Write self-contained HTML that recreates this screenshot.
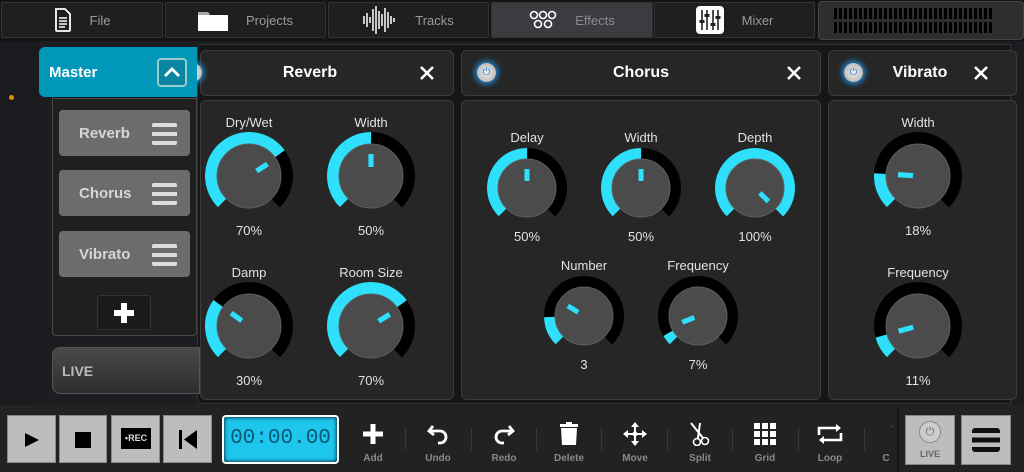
<!DOCTYPE html>
<html><head><meta charset="utf-8"><style>
*{box-sizing:border-box;margin:0;padding:0}
body{width:1024px;height:472px;overflow:hidden;background:#1c1d20;font-family:"Liberation Sans",sans-serif;position:relative}
.abs{position:absolute}
.tab{position:absolute;top:2px;height:36px;background:#1f1f1f;border:1px solid #333;border-radius:2px;color:#9a9a9a;font-size:13px;display:flex;align-items:center;justify-content:center;gap:18px}
.tab.sel{background:#3a3c40;color:#8a8c90}
.panel{position:absolute;background:#262626;border:1px solid #3c3c3c;border-radius:6px}
.hdr{color:#fff;font-weight:bold;font-size:16px;display:flex;align-items:center;justify-content:center}
.lbl{position:absolute;color:#e2e2e2;font-size:13px;text-align:center;width:120px}
.item{position:absolute;left:58px;width:133px;height:48px;background:#6c6c6c;border:1px solid #222;border-radius:5px;color:#d6d6d6;font-weight:bold;font-size:15px;display:flex;align-items:center;padding-left:20px}
.item i{position:absolute;right:13px;top:13px;width:25px;height:22px;background:linear-gradient(#ddd 0 4px,transparent 4px 9px,#ddd 9px 13px,transparent 13px 18px,#ddd 18px 22px);border-radius:2px}
.tb{position:absolute;top:415px;height:48px;background:#bdbdbd;border:1px solid #888}
.tool{position:absolute;top:421px;width:60px;text-align:center;color:#8a8a8a;font-size:10px;font-weight:bold}
.tool .ic{height:26px;margin-bottom:6px;display:flex;align-items:center;justify-content:center}
.sep{position:absolute;top:428px;width:1px;height:22px;background:#3a3a3a}
.pw{position:absolute;top:63px;width:19px;height:19px;border-radius:50%;background:radial-gradient(#eee,#aaa);box-shadow:0 0 6px 2px #1d8fe0;display:flex;align-items:center;justify-content:center;color:#1e7fd8;font-size:10px}
</style></head><body>
<div class="abs" style="left:0;top:0;width:1024px;height:41px;background:#141414"></div>
<div class="tab" style="left:1px;width:162px"><svg width="18" height="24" viewBox="0 0 18 24"><path d="M2 1h9l5 5v16a1 1 0 0 1-1 1H3a1 1 0 0 1-1-1z" fill="none" stroke="#fff" stroke-width="1.8"/><path d="M5 10h8M5 13h8M5 16h8M5 19h6" stroke="#fff" stroke-width="1.5"/></svg>File</div>
<div class="tab" style="left:165px;width:161px"><svg width="30" height="22" viewBox="0 0 30 22"><path d="M0 3h10l2 3h18v16H0z" fill="#fff"/><path d="M0 3h10l2 3H0z" fill="#aaa"/></svg>Projects</div>
<div class="tab" style="left:328px;width:161px"><svg width="34" height="30" viewBox="0 0 34 30"><g stroke="#fff" stroke-width="1.5"><path d="M1 11v8M4 8v14M7 12v6M10 4v22M13 1v28M16 6v18M19 9v12M22 3v24M25 7v16M28 11v8M31 13v4"/></g></svg>Tracks</div>
<div class="tab sel" style="left:491px;width:162px"><svg width="28" height="22" viewBox="0 0 28 22"><g fill="none" stroke="#fff" stroke-width="1.6"><circle cx="5" cy="6" r="3.5"/><circle cx="14" cy="6" r="3.5"/><circle cx="23" cy="6" r="3.5"/><circle cx="9" cy="15" r="3.5"/><circle cx="19" cy="15" r="3.5"/></g></svg>Effects</div>
<div class="tab" style="left:654px;width:161px"><svg width="28" height="28" viewBox="0 0 28 28"><rect x="0" y="0" width="28" height="28" rx="4" fill="#fff"/><g stroke="#222" stroke-width="1.6"><path d="M6 4v20M11 4v20M17 4v20M22 4v20"/></g><g fill="#222"><rect x="3.5" y="14" width="5" height="3"/><rect x="8.5" y="8" width="5" height="3"/><rect x="14.5" y="17" width="5" height="3"/><rect x="19.5" y="10" width="5" height="3"/></g></svg>Mixer</div>
<div class="abs" style="left:818px;top:1px;width:206px;height:39px;background:#2e2e2e;border-radius:4px;border:1px solid #444"></div>
<div class="abs" style="left:834px;top:8px;width:160px;height:25px;background:repeating-linear-gradient(90deg,#000 0 3px,transparent 3px 5px);-webkit-mask:linear-gradient(#000 0 11px,transparent 11px 14px,#000 14px)"></div>

<div class="abs" style="left:0;top:41px;width:38px;height:364px;background:#1a1b1e"></div>
<div class="abs" style="left:9px;top:95px;width:5px;height:5px;border-radius:50%;background:#e08a10"></div>
<div class="abs" style="left:197px;top:44px;width:823px;height:360px;background:#161616;border:1px solid #333;border-radius:4px"></div>
<div class="abs" style="left:1010px;top:44px;width:14px;height:361px;background:#1c1d20;border-left:1px solid #333"></div>

<div class="panel" style="left:200px;top:50px;width:254px;height:46px"></div>
<div class="panel" style="left:200px;top:100px;width:254px;height:300px"></div>
<div class="panel" style="left:461px;top:50px;width:360px;height:46px"></div>
<div class="panel" style="left:461px;top:100px;width:360px;height:300px"></div>
<div class="panel" style="left:828px;top:50px;width:189px;height:46px"></div>
<div class="panel" style="left:828px;top:100px;width:189px;height:300px"></div>
<div class="pw" style="left:183px">⏻</div>
<div class="pw" style="left:477px">⏻</div>
<div class="pw" style="left:844px">⏻</div>
<div class="hdr abs" style="left:200px;top:50px;width:220px;height:46px">Reverb</div>
<div class="hdr abs" style="left:461px;top:50px;width:360px;height:46px">Chorus</div>
<div class="hdr abs" style="left:860px;top:50px;width:120px;height:46px">Vibrato</div>
<svg class="abs" style="left:419px;top:65px" width="16" height="16"><path d="M2 2L14 14M14 2L2 14" stroke="#fff" stroke-width="2.6"/></svg>
<svg class="abs" style="left:786px;top:65px" width="16" height="16"><path d="M2 2L14 14M14 2L2 14" stroke="#fff" stroke-width="2.6"/></svg>
<svg class="abs" style="left:973px;top:65px" width="16" height="16"><path d="M2 2L14 14M14 2L2 14" stroke="#fff" stroke-width="2.6"/></svg>

<div class="abs" style="left:39px;top:47px;width:158px;height:50px;background:#0097b8;border-radius:6px 0 0 6px"></div>
<div class="abs" style="left:49px;top:64px;color:#fff;font-weight:bold;font-size:15px">Master</div>
<div class="abs" style="left:157px;top:58px;width:30px;height:29px;border:2px solid #9cc;border-radius:4px;background:#0a86a3"></div>
<svg class="abs" style="left:162px;top:64px" width="20" height="16"><path d="M3 12L10 5L17 12" fill="none" stroke="#fff" stroke-width="2.8"/></svg>
<div class="abs" style="left:52px;top:98px;width:145px;height:238px;background:#1f1f1f;border:1px solid #4a4a4a;border-radius:0 0 4px 4px"></div>
<div class="item" style="top:109px">Reverb<i></i></div>
<div class="item" style="top:169px">Chorus<i></i></div>
<div class="item" style="top:230px">Vibrato<i></i></div>
<div class="abs" style="left:97px;top:295px;width:54px;height:35px;background:#1a1a1a;border:1px solid #333;border-radius:3px"></div>
<svg class="abs" style="left:111px;top:300px" width="26" height="26"><path d="M13 3v20M3 13h20" stroke="#fff" stroke-width="6"/></svg>
<div class="abs" style="left:52px;top:347px;width:148px;height:47px;background:linear-gradient(#4a4a4a,#2e2e2e);border:1px solid #555;border-radius:8px 0 0 8px"></div>
<div class="abs" style="left:62px;top:363px;color:#bbb;font-weight:bold;font-size:14px">LIVE</div>

<svg class="abs" style="left:0;top:0" width="1024" height="472">
<defs>
<g id="kb"><circle r="38" fill="none" stroke="#000" stroke-width="12" stroke-dasharray="179.07 300" transform="rotate(135)"/></g>
<g id="ks"><circle r="34.5" fill="none" stroke="#000" stroke-width="11" stroke-dasharray="162.58 300" transform="rotate(135)"/></g>
</defs>
<g transform="translate(249,176)"><use href="#kb"/><circle r="38" fill="none" stroke="#2ee0fb" stroke-width="12" stroke-dasharray="125.35 300" transform="rotate(135)"/><circle r="32" fill="#4b4b4b" stroke="#5e5e5e"/><rect x="-2.6" y="-22" width="5.2" height="13" fill="#2ee0fb" transform="rotate(57)"/></g>
<g transform="translate(371,176)"><use href="#kb"/><circle r="38" fill="none" stroke="#2ee0fb" stroke-width="12" stroke-dasharray="89.5 300" transform="rotate(135)"/><circle r="32" fill="#4b4b4b" stroke="#5e5e5e"/><rect x="-2.6" y="-22" width="5.2" height="13" fill="#2ee0fb"/></g>
<g transform="translate(249,326)"><use href="#kb"/><circle r="38" fill="none" stroke="#2ee0fb" stroke-width="12" stroke-dasharray="53.7 300" transform="rotate(135)"/><circle r="32" fill="#4b4b4b" stroke="#5e5e5e"/><rect x="-2.6" y="-22" width="5.2" height="13" fill="#2ee0fb" transform="rotate(-54)"/></g>
<g transform="translate(371,326)"><use href="#kb"/><circle r="38" fill="none" stroke="#2ee0fb" stroke-width="12" stroke-dasharray="125.35 300" transform="rotate(135)"/><circle r="32" fill="#4b4b4b" stroke="#5e5e5e"/><rect x="-2.6" y="-22" width="5.2" height="13" fill="#2ee0fb" transform="rotate(58)"/></g>
<g transform="translate(918,176)"><use href="#kb"/><circle r="38" fill="none" stroke="#2ee0fb" stroke-width="12" stroke-dasharray="32.2 300" transform="rotate(135)"/><circle r="32" fill="#4b4b4b" stroke="#5e5e5e"/><rect x="-2.6" y="-20" width="5.2" height="15" fill="#2ee0fb" transform="rotate(-86)"/></g>
<g transform="translate(918,326)"><use href="#kb"/><circle r="38" fill="none" stroke="#2ee0fb" stroke-width="12" stroke-dasharray="19.7 300" transform="rotate(135)"/><circle r="32" fill="#4b4b4b" stroke="#5e5e5e"/><rect x="-2.6" y="-20" width="5.2" height="15" fill="#2ee0fb" transform="rotate(-105)"/></g>
<g transform="translate(527,188)"><use href="#ks"/><circle r="34.5" fill="none" stroke="#2ee0fb" stroke-width="11" stroke-dasharray="81.29 300" transform="rotate(135)"/><circle r="29" fill="#4b4b4b" stroke="#5e5e5e"/><rect x="-2.5" y="-19" width="5" height="12" fill="#2ee0fb"/></g>
<g transform="translate(641,188)"><use href="#ks"/><circle r="34.5" fill="none" stroke="#2ee0fb" stroke-width="11" stroke-dasharray="81.29 300" transform="rotate(135)"/><circle r="29" fill="#4b4b4b" stroke="#5e5e5e"/><rect x="-2.5" y="-19" width="5" height="12" fill="#2ee0fb"/></g>
<g transform="translate(755,188)"><use href="#ks"/><circle r="34.5" fill="none" stroke="#2ee0fb" stroke-width="11" stroke-dasharray="162.58 300" transform="rotate(135)"/><circle r="29" fill="#4b4b4b" stroke="#5e5e5e"/><rect x="-2.5" y="-19" width="5" height="12" fill="#2ee0fb" transform="rotate(135)"/></g>
<g transform="translate(584,316)"><use href="#ks"/><circle r="34.5" fill="none" stroke="#2ee0fb" stroke-width="11" stroke-dasharray="26 300" transform="rotate(135)"/><circle r="29" fill="#4b4b4b" stroke="#5e5e5e"/><rect x="-2.5" y="-19" width="5" height="12" fill="#2ee0fb" transform="rotate(-58)"/></g>
<g transform="translate(698,316)"><use href="#ks"/><circle r="34.5" fill="none" stroke="#2ee0fb" stroke-width="11" stroke-dasharray="9 300" transform="rotate(135)"/><circle r="29" fill="#4b4b4b" stroke="#5e5e5e"/><rect x="-2.5" y="-17" width="5" height="13" fill="#2ee0fb" transform="rotate(-112)"/></g>
</svg>
<div class="lbl" style="left:189px;top:115px">Dry/Wet</div><div class="lbl" style="left:189px;top:223px">70%</div>
<div class="lbl" style="left:311px;top:115px">Width</div><div class="lbl" style="left:311px;top:223px">50%</div>
<div class="lbl" style="left:189px;top:265px">Damp</div><div class="lbl" style="left:189px;top:373px">30%</div>
<div class="lbl" style="left:311px;top:265px">Room Size</div><div class="lbl" style="left:311px;top:373px">70%</div>
<div class="lbl" style="left:467px;top:130px">Delay</div><div class="lbl" style="left:467px;top:229px">50%</div>
<div class="lbl" style="left:581px;top:130px">Width</div><div class="lbl" style="left:581px;top:229px">50%</div>
<div class="lbl" style="left:695px;top:130px">Depth</div><div class="lbl" style="left:695px;top:229px">100%</div>
<div class="lbl" style="left:524px;top:258px">Number</div><div class="lbl" style="left:524px;top:357px">3</div>
<div class="lbl" style="left:638px;top:258px">Frequency</div><div class="lbl" style="left:638px;top:357px">7%</div>
<div class="lbl" style="left:858px;top:115px">Width</div><div class="lbl" style="left:858px;top:223px">18%</div>
<div class="lbl" style="left:858px;top:265px">Frequency</div><div class="lbl" style="left:858px;top:373px">11%</div>

<div class="abs" style="left:0;top:405px;width:1024px;height:67px;background:#222"></div>
<div class="tb" style="left:7px;width:49px"></div>
<div class="tb" style="left:59px;width:48px"></div>
<div class="tb" style="left:111px;width:49px"></div>
<div class="tb" style="left:163px;width:49px"></div>
<svg class="abs" style="left:24px;top:432px" width="16" height="16"><path d="M1 1L15 8L1 15z" fill="#000"/></svg>
<div class="abs" style="left:75px;top:432px;width:16px;height:16px;background:#000"></div>
<div class="abs" style="left:121px;top:428px;width:30px;height:21px;background:#000;color:#ddd;font-size:9px;font-weight:bold;line-height:21px;text-align:center">•REC</div>
<svg class="abs" style="left:178px;top:429px" width="20" height="21"><rect x="1" y="1" width="3" height="19" fill="#000"/><path d="M19 1L6 10.5L19 20z" fill="#000"/></svg>
<div class="abs" style="left:222px;top:415px;width:117px;height:49px;background:#1ec6ee;border:2px solid #fff;border-radius:4px;box-shadow:inset 0 0 4px #000"></div>
<div class="abs" style="left:222px;top:427px;width:117px;text-align:center;font-family:'Liberation Mono',monospace;font-size:21px;color:#0a5a74">00:00.00</div>

<div class="tool" style="left:343px"><div class="ic"><svg width="22" height="22"><path d="M11 1v20M1 11h20" stroke="#fff" stroke-width="5"/></svg></div>Add</div>
<div class="sep" style="left:405px"></div>
<div class="tool" style="left:408px"><div class="ic"><svg width="22" height="22"><path d="M6 3L2 8L7 12" fill="none" stroke="#fff" stroke-width="2.8"/><path d="M3 8h10a6 6 0 0 1 0 12h-2" fill="none" stroke="#fff" stroke-width="2.8"/></svg></div>Undo</div>
<div class="sep" style="left:471px"></div>
<div class="tool" style="left:474px"><div class="ic"><svg width="22" height="22"><path d="M16 3L20 8L15 12" fill="none" stroke="#fff" stroke-width="2.8"/><path d="M19 8H9a6 6 0 0 0 0 12h2" fill="none" stroke="#fff" stroke-width="2.8"/></svg></div>Redo</div>
<div class="sep" style="left:536px"></div>
<div class="tool" style="left:539px"><div class="ic"><svg width="22" height="24"><rect x="2" y="2" width="18" height="3" fill="#fff"/><rect x="8" y="0" width="6" height="3" fill="#fff"/><path d="M3 6h16l-1 17H4z" fill="#fff"/></svg></div>Delete</div>
<div class="sep" style="left:601px"></div>
<div class="tool" style="left:605px"><div class="ic"><svg width="24" height="24"><path d="M12 2v20M2 12h20" stroke="#fff" stroke-width="2"/><path d="M12 0l-4 5h8zM12 24l-4-5h8zM0 12l5-4v8zM24 12l-5-4v8z" fill="#fff"/><circle cx="12" cy="12" r="2.5" fill="#fff"/></svg></div>Move</div>
<div class="sep" style="left:667px"></div>
<div class="tool" style="left:670px"><div class="ic"><svg width="24" height="24"><path d="M3 1L15 16M12 1L10 16" stroke="#fff" stroke-width="2"/><circle cx="17" cy="19" r="3.5" fill="none" stroke="#fff" stroke-width="1.6"/><circle cx="9" cy="20" r="3.5" fill="none" stroke="#fff" stroke-width="1.6"/></svg></div>Split</div>
<div class="sep" style="left:732px"></div>
<div class="tool" style="left:735px"><div class="ic"><svg width="22" height="22"><g fill="#fff"><rect x="0" y="0" width="6" height="6"/><rect x="8" y="0" width="6" height="6"/><rect x="16" y="0" width="6" height="6"/><rect x="0" y="8" width="6" height="6"/><rect x="8" y="8" width="6" height="6"/><rect x="16" y="8" width="6" height="6"/><rect x="0" y="16" width="6" height="6"/><rect x="8" y="16" width="6" height="6"/><rect x="16" y="16" width="6" height="6"/></g></svg></div>Grid</div>
<div class="sep" style="left:798px"></div>
<div class="tool" style="left:800px"><div class="ic"><svg width="28" height="22"><path d="M3 12V5h20M25 10v7H5" fill="none" stroke="#fff" stroke-width="2.6"/><path d="M20 1l5 4-5 4zM8 13l-5 4 5 4z" fill="#fff"/></svg></div>Loop</div>
<div class="sep" style="left:864px"></div>
<div class="tool" style="left:856px;width:60px;overflow:hidden"><div class="ic"><svg width="22" height="22"><path d="M18 3l2 3M20 12l-1 6" stroke="#fff" stroke-width="1.5"/></svg></div>C</div>
<div class="abs" style="left:893px;top:405px;width:131px;height:67px;background:#222"></div>
<div class="abs" style="left:897px;top:408px;width:2px;height:64px;background:#161616"></div>
<div class="tb" style="left:905px;width:50px;height:50px"></div>
<div class="abs" style="left:919px;top:421px;width:22px;height:22px;border-radius:50%;background:#ccc;border:1px solid #888;color:#666;font-size:11px;text-align:center;line-height:20px">⏻</div>
<div class="abs" style="left:905px;top:449px;width:50px;text-align:center;color:#666;font-size:9px;font-weight:bold">LIVE</div>
<div class="tb" style="left:961px;width:50px;height:50px"></div>
<div class="abs" style="left:972px;top:428px;width:28px;height:24px;background:linear-gradient(#111 0 5px,transparent 5px 9.5px,#111 9.5px 14.5px,transparent 14.5px 19px,#111 19px 24px);border-radius:3px"></div>
</body></html>
